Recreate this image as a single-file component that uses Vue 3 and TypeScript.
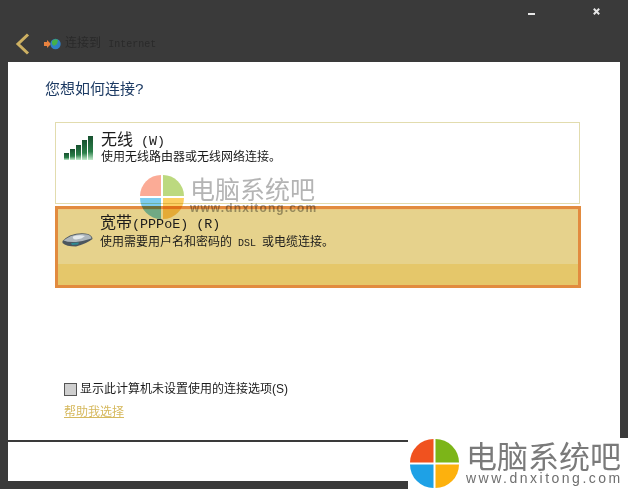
<script setup lang="ts">
interface Option {
  title: string
  key: string
  desc: string
  latin?: string
  descEnd?: string
  icon: string
  selected: boolean
}

const options: Option[] = [
  { title: '无线', key: ' (W)', desc: '使用无线路由器或无线网络连接。', icon: 'wifi', selected: false },
  {
    title: '宽带',
    key: '(PPPoE) (R)',
    desc: '使用需要用户名和密码的',
    latin: ' DSL ',
    descEnd: '或电缆连接。',
    icon: 'drive',
    selected: true
  }
]

const bars = [
  { x: 0, y: 17, h: 7 },
  { x: 6, y: 13, h: 11 },
  { x: 12, y: 9, h: 15 },
  { x: 18, y: 4, h: 20 },
  { x: 24, y: 0, h: 24 }
]
</script>

<template>
  <div class="window">
    <div class="controls">
      <span class="min"></span>
      <svg width="7" height="7" viewBox="0 0 7 7">
        <path d="M0.8 0.8 L6.2 6.2 M6.2 0.8 L0.8 6.2" stroke="#e6e6e6" stroke-width="2" />
      </svg>
    </div>

    <div class="header">
      <svg class="back" width="15" height="22" viewBox="0 0 15 22">
        <path d="M13 1.5 L3 11 L13 20.5" fill="none" stroke="#cdb062" stroke-width="3" />
      </svg>
      <svg class="globe" width="17" height="12" viewBox="0 0 17 12">
        <path d="M0 4 H3 V2 L7 6 L3 10 V8 H0 Z" fill="#e8823f" />
        <circle cx="11.5" cy="6" r="5.2" fill="#2f7fc4" />
        <path d="M8 3 Q11 0 14 2 L13 6 L10 8 L8 6 Z" fill="#45b04a" />
      </svg>
      <span class="header-text">连接到 <span class="header-latin">Internet</span></span>
    </div>

    <div class="panel">
      <div class="main">
        <h1 class="title">您想如何连接?</h1>

        <div class="options">
          <div v-for="o in options" :key="o.title" class="option" :class="{ selected: o.selected }">
            <svg v-if="o.icon === 'wifi'" class="icon" width="29" height="24" viewBox="0 0 29 24">
              <defs>
                <linearGradient id="bar" x1="0" y1="0" x2="0" y2="1">
                  <stop offset="0" stop-color="#17512f" />
                  <stop offset="0.65" stop-color="#2a7f49" />
                  <stop offset="1" stop-color="#c4eccd" />
                </linearGradient>
              </defs>
              <rect v-for="b in bars" :key="b.x" :x="b.x" :y="b.y" width="5" :height="b.h" fill="url(#bar)" />
            </svg>
            <svg v-else class="icon" width="31" height="15" viewBox="0 0 31 15">
              <path d="M0.5 9 Q3 6 8 3.5 Q18 0 26 2 Q30.5 4 30.5 7 Q24 12 14 14.5 Q4 14.5 0.5 11 Z" fill="#4c565e" />
              <path d="M1.5 8.5 Q5 6 9 4 Q18 1 25.5 2.5 Q29.5 4 29.5 6.5 Q22 9 14 10 Q6 10.5 1.5 8.5 Z" fill="#aeb6bc" />
              <path d="M11 4.5 Q17 2.5 23 4 Q20 7 14 7.5 Q10 7 11 4.5 Z" fill="#e4e9ec" />
              <path d="M9 11 L17 10.5 L16 12.5 L10 13 Z" fill="#2f8a93" />
            </svg>
            <div class="option-text">
              <div class="option-title">{{ o.title }}<span class="option-key">{{ o.key }}</span></div>
              <div class="option-desc">{{ o.desc }}<span v-if="o.latin" class="desc-latin">{{ o.latin }}</span>{{ o.descEnd }}</div>
            </div>
          </div>
        </div>

        <div class="spacer"></div>

        <label class="check-row">
          <span class="box"></span>
          <span>显示此计算机未设置使用的连接选项(S)</span>
        </label>
        <a class="help">帮助我选择</a>
      </div>
      <div class="footer"></div>
    </div>

    <!-- watermark in the middle of the panel -->
    <div class="mark">
      <svg width="44" height="44" viewBox="0 0 44 44">
        <path d="M21 0 V21 H0 A21 21 0 0 1 21 0 Z" fill="#fbab96" />
        <path d="M23 0 A21 21 0 0 1 44 21 H23 Z" fill="#bcd97f" />
        <path d="M0 23 H21 V44 A21 21 0 0 1 0 23 Z" fill="#7ccdf0" />
        <path d="M23 23 H44 A21 21 0 0 1 23 44 Z" fill="#fdcf62" />
      </svg>
      <div class="mark-text">
        <div class="mark-cn">电脑系统吧</div>
        <div class="mark-en">www.dnxitong.com</div>
      </div>
    </div>

    <!-- site logo pasted over the corner -->
    <div class="corner">
      <svg width="49" height="49" viewBox="0 0 50 50">
        <path d="M24 0 V24 H0 A24 24 0 0 1 24 0 Z" fill="#f0521f" />
        <path d="M26 0 A24 24 0 0 1 50 24 H26 Z" fill="#7cb518" />
        <path d="M0 26 H24 V50 A24 24 0 0 1 0 26 Z" fill="#1ea1e6" />
        <path d="M26 26 H50 A24 24 0 0 1 26 50 Z" fill="#fdb10d" />
      </svg>
      <div class="mark-text">
        <div class="corner-cn">电脑系统吧</div>
        <div class="corner-en">www.dnxitong.com</div>
      </div>
    </div>
  </div>
</template>

<style scoped>
.window {
  position: relative;
  width: 628px;
  height: 489px;
  box-sizing: border-box;
  padding: 0 8px 8px;
  background: #3a3a3a;
  display: flex;
  flex-direction: column;
  overflow: hidden;
  font-family: "Liberation Mono", "Noto Sans CJK SC", monospace;
}

.controls {
  position: absolute;
  top: 8px;
  right: 28px;
  display: flex;
  align-items: flex-start;
  gap: 58px;
}

.min {
  width: 7px;
  height: 2px;
  margin-top: 5px;
  background: #e6e6e6;
}

.header {
  height: 62px;
  box-sizing: border-box;
  padding: 33px 0 0 7px;
  display: flex;
  align-items: flex-start;
}

.globe {
  margin: 5px 0 0 14px;
}

.header-text {
  margin: 3px 0 0 4px;
  font-size: 12px;
  line-height: 16px;
  color: #2a2a2a;
}

.header-latin {
  font-size: 10px;
}

.panel {
  flex: 1;
  background: #fff;
  display: flex;
  flex-direction: column;
}

.main {
  flex: 1;
  box-sizing: border-box;
  padding: 19px 40px 21px 37px;
  display: flex;
  flex-direction: column;
  border-bottom: 2px solid #3a3a3a;
}

.title {
  margin: 0;
  font-size: 15px;
  font-weight: 400;
  line-height: 20px;
  color: #1c3a63;
}

.options {
  margin: 21px 0 0 10px;
  display: flex;
  flex-direction: column;
  gap: 2px;
}

.option {
  height: 82px;
  box-sizing: border-box;
  padding: 9px 0 0 8px;
  border: 1px solid #e2dcae;
  display: flex;
  align-items: flex-start;
}

.option .icon {
  margin-top: 4px;
}

.option.selected {
  width: 526px;
  padding: 6px 0 0 4px;
  border: 3px solid #e28b3f;
  background: linear-gradient(#e6d28c 0, #e6d28c 55px, #e5c76a 55px);
  box-shadow: inset 0 1px 0 #efc97f;
}

.option.selected .icon {
  margin-top: 17px;
}

.option-text {
  margin-left: 8px;
  color: #1b1b1b;
}

.option.selected .option-text {
  margin-left: 7px;
}

.option-title {
  font-size: 16px;
  line-height: 18px;
  white-space: pre;
}

.option-key {
  font-size: 13.4px;
}

.option-desc {
  font-size: 12px;
  line-height: 14px;
  white-space: pre;
}

.desc-latin {
  font-size: 10px;
}

.option.selected .option-desc {
  margin-top: 2px;
}

.spacer {
  flex: 1;
}

.check-row {
  display: flex;
  align-items: center;
  gap: 3px;
  margin-left: 19px;
  font-size: 12px;
  line-height: 14px;
  color: #1b1b1b;
  font-family: "Liberation Sans", "Noto Sans CJK SC", sans-serif;
}

.box {
  width: 11px;
  height: 11px;
  border: 1px solid #555;
  background: #cfcfcf;
}

.help {
  align-self: flex-start;
  margin: 9px 0 0 19px;
  font-size: 12px;
  line-height: 14px;
  color: #d6b95e;
  text-decoration: underline;
  font-family: "Liberation Sans", "Noto Sans CJK SC", sans-serif;
}

.footer {
  height: 39px;
}

.mark {
  position: absolute;
  left: 140px;
  top: 175px;
  display: flex;
  gap: 6px;
  mix-blend-mode: multiply;
}

.mark-text {
  font-family: "Noto Sans CJK SC", sans-serif;
}

.mark-cn {
  font-size: 25px;
  line-height: 26px;
  color: #b4b4b4;
}

.mark-en {
  font-size: 12px;
  line-height: 14px;
  font-weight: 700;
  letter-spacing: 1.1px;
  color: #a8a8a8;
  font-family: "Liberation Sans", sans-serif;
}

.corner {
  position: absolute;
  left: 408px;
  top: 438px;
  width: 220px;
  height: 51px;
  box-sizing: border-box;
  padding: 1px 0 0 2px;
  background: #fff;
  display: flex;
  gap: 7px;
}

.corner-cn {
  font-size: 31px;
  line-height: 32px;
  color: #7a7a7a;
}

.corner-en {
  font-size: 14px;
  line-height: 15px;
  letter-spacing: 2.5px;
  color: #6f6f6f;
  font-family: "Liberation Sans", sans-serif;
}
</style>
